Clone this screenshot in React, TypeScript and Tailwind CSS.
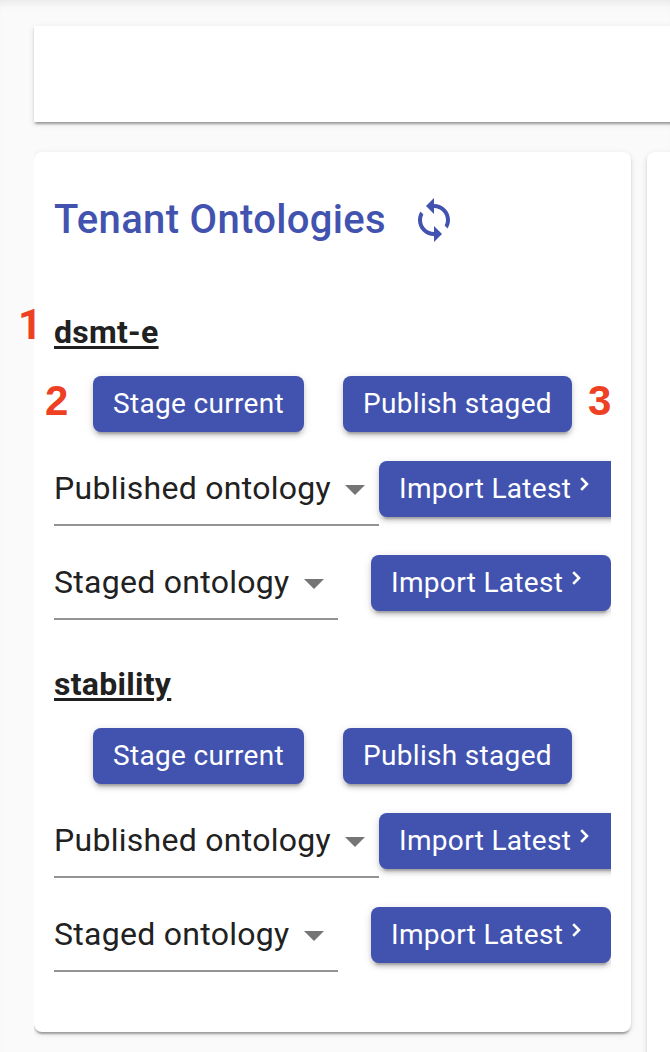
import type { ReactNode } from "react";

const raised =
  "shadow-[0_6px_2px_-4px_rgba(0,0,0,0.2),0_4px_4px_0_rgba(0,0,0,0.14),0_2px_10px_0_rgba(0,0,0,0.12)]";
const surface =
  "shadow-[0_4px_2px_-2px_rgba(0,0,0,0.2),0_2px_2px_0_rgba(0,0,0,0.14),0_2px_6px_0_rgba(0,0,0,0.12)]";

function Button({ children, className }: { children: ReactNode; className: string }) {
  return (
    <button
      className={`flex h-14 shrink-0 items-center rounded-lg bg-[#4253af] pl-5 text-[28px] leading-none tracking-[0.32px] whitespace-nowrap text-white ${raised} ${className}`}
    >
      {children}
    </button>
  );
}

function Select({ label, className }: { label: string; className: string }) {
  return (
    <div
      className={`flex h-[65px] shrink-0 items-start justify-between border-b-2 border-[#949494] text-[32px] leading-[54px] whitespace-nowrap text-[#212121] ${className}`}
    >
      <span>{label}</span>
      <svg className="mt-6 h-[10px] w-5" viewBox="0 0 20 10" fill="#757575">
        <path d="M0 0h20L10 10z" />
      </svg>
    </div>
  );
}

function ImportButton() {
  return (
    <Button className="w-60">
      <span>Import Latest</span>
      <svg className="mb-[10px] ml-[9px] h-[14px] w-[9px]" viewBox="0 0 9 14" fill="none" stroke="white" strokeWidth="2.6">
        <path d="M1.2 1.2L7 7l-5.8 5.8" />
      </svg>
    </Button>
  );
}

function Tenant({ name }: { name: string }) {
  return (
    <section className="h-[352px] overflow-x-clip">
      <h3 className="h-[68px] pt-1 text-[32px] leading-[40px] font-bold tracking-[0.28px] text-[#212121] underline decoration-[3px] underline-offset-[3px]">
        {name}
      </h3>
      <div className="flex h-[85px] pl-[39px]">
        <Button className="w-[211px]">Stage current</Button>
        <Button className="ml-[39px] w-[229px]">Publish staged</Button>
      </div>
      <div className="flex h-[94px]">
        <Select label="Published ontology" className="w-[325px] pr-[14px] tracking-[0.28px]" />
        <ImportButton />
      </div>
      <div className="flex h-[94px] justify-between">
        <Select label="Staged ontology" className="w-[284px] pr-[14px] tracking-[0.28px]" />
        <ImportButton />
      </div>
    </section>
  );
}

function Marker({ n, className }: { n: number; className: string }) {
  return (
    <span className={`absolute text-[42px] leading-[42px] font-bold text-[#ee4023] ${className}`}>
      {n}
    </span>
  );
}

export default function App() {
  return (
    <div className="relative h-[1052px] w-full overflow-hidden bg-[#fafafa] pt-[26px] pl-[34px] font-[Roboto,sans-serif] shadow-[inset_0_8px_10px_-6px_rgba(0,0,0,0.09)]">
      <header className={`h-24 w-[670px] bg-white ${surface}`} />
      <main className="mt-[15px] flex h-[930px] w-[680px] gap-4 overflow-hidden pt-[15px]">
        <article className={`h-[880px] w-[597px] shrink-0 rounded-lg bg-white px-5 ${surface}`}>
          <div className="flex h-[156px] items-start pt-[44px] text-[#4253af]">
            <h2 className="text-[40px] leading-[48px] font-medium tracking-[0.32px] whitespace-nowrap">
              Tenant Ontologies
            </h2>
            <svg className="ml-6 size-12" viewBox="0 0 24 24" fill="currentColor">
              <path d="M12 4V1L8 5l4 4V6c3.31 0 6 2.69 6 6 0 1.01-.25 1.97-.7 2.8l1.46 1.46C19.54 15.03 20 13.57 20 12c0-4.42-3.58-8-8-8zm0 14c-3.31 0-6-2.69-6-6 0-1.01.25-1.97.7-2.8L5.24 7.74C4.46 8.97 4 10.43 4 12c0 4.42 3.58 8 8 8v3l4-4-4-4v3z" />
            </svg>
          </div>
          <Tenant name="dsmt-e" />
          <Tenant name="stability" />
        </article>
        <aside className={`h-[960px] w-[100px] shrink-0 rounded-lg bg-white ${surface}`} />
      </main>
      <Marker n={1} className="top-[304px] left-[18px] font-[Roboto,sans-serif]" />
      <Marker n={2} className="top-[380px] left-[45px] font-['Liberation_Sans',Arial,sans-serif]" />
      <Marker n={3} className="top-[380px] left-[588px] font-['Liberation_Sans',Arial,sans-serif]" />
    </div>
  );
}
